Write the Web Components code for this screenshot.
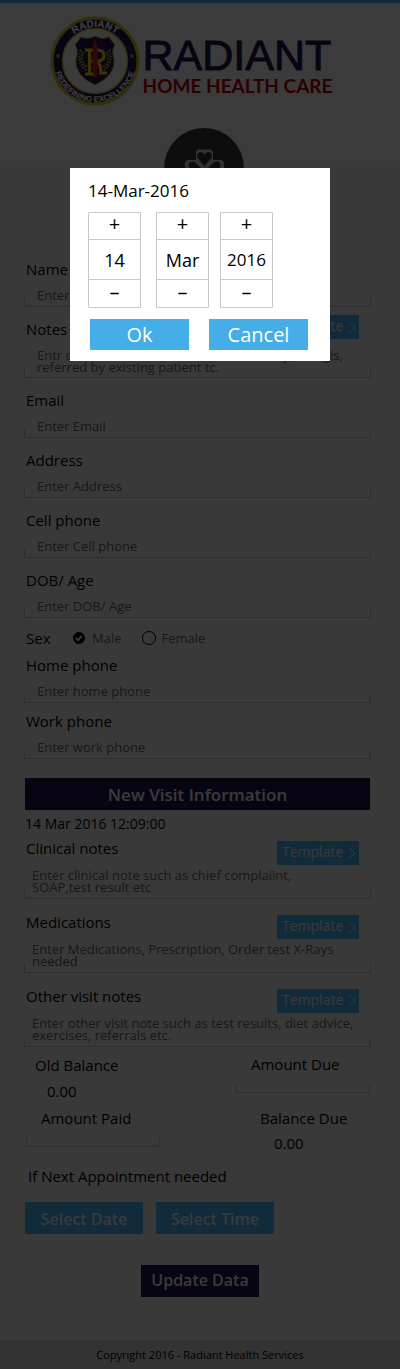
<!DOCTYPE html>
<html lang="en">
<head>
<meta charset="utf-8">
<meta name="viewport" content="width=device-width, initial-scale=1">
<title>Radiant Home Health Care</title>
<style>
  body { margin: 0; background: #e4e4e4; color: #000; font-family: "Open Sans", "Noto Sans", sans-serif; font-size: 15px; line-height: 20px; }
</style>
</head>
<body>
<patient-page></patient-page>

<script>
const define = (name, html, setup) => {
  const template = document.createElement('template');
  template.innerHTML = `<style>*, *::before { box-sizing: border-box; } button, input, textarea { font: inherit; color: inherit; border: 0; border-radius: 0; margin: 0; padding: 0; }</style>` + html;
  customElements.define(name, class extends HTMLElement {
    constructor() {
      super();
      this.attachShadow({ mode: 'open' }).append(template.content.cloneNode(true));
    }
    connectedCallback() { if (setup) setup(this, this.shadowRoot); }
  });
};

/* Round crest with lettering on its ring */
define('radiant-emblem', `
<style>
  :host { display: block; width: 90px; height: 90px; flex: none; }
  svg { display: block; width: 100%; height: 100%; }
  text { font-family: "Liberation Sans", sans-serif; font-weight: 700; fill: #fff; }
</style>
<svg viewBox="0 0 90 90" aria-label="Radiant, redefining excellence">
  <defs>
    <path id="upper" d="M11 45 A34 34 0 0 1 79 45"/>
    <path id="lower" d="M4 45 A41 41 0 0 0 86 45"/>
  </defs>
  <circle cx="45" cy="45" r="43" fill="#24134c" stroke="#c9be1e" stroke-width="3"/>
  <circle cx="45" cy="45" r="32.5" fill="#ececec" stroke="#c9be1e" stroke-width="1.4"/>
  <circle cx="8" cy="40" r="1.7" fill="#9a96ad"/>
  <circle cx="82" cy="40" r="1.7" fill="#9a96ad"/>
  <text font-size="10"><textPath href="#upper" startOffset="50%" text-anchor="middle">RADIANT</textPath></text>
  <text font-size="8"><textPath href="#lower" startOffset="50%" text-anchor="middle">REDEFINING EXCELLENCE</textPath></text>
  <path d="M31 21 Q38 24 45 20 Q52 24 59 21 L65 29 Q61 34 64 43 Q66 59 45 69 Q24 59 26 43 Q29 34 25 29 Z" fill="#24134c" stroke="#a8a020" stroke-width="1"/>
  <g fill="none" stroke="#c9be1e" stroke-width="2" stroke-dasharray="1.6 1.4">
    <path d="M31 34 Q26 45 36 54"/><path d="M59 34 Q64 45 54 54"/>
    <path d="M33.500 36 Q29 45 37 51"/><path d="M56.500 36 Q61 45 53 51"/>
  </g>
  <g fill="none" stroke="#e0d018" stroke-width="3.200">
    <path d="M35 34 H47 Q54 34 54 39.500 Q54 45 47 45 H41 M39.500 34 V58 M35 58 H44 M46 45 Q51 47 51 57 H57"/>
  </g>
  <path d="M45 22 L47.500 30 V50 H49 V53 H47 V61 H43 V53 H41 V50 H42.500 V30 Z" fill="#c8201c"/>
</svg>`);

define('brand-header', `
<style>
  :host { display: block; height: 167px; background: #ececec; border-top: 3px solid #45ade8; padding: 13px 0 0; }
  .logo { display: flex; justify-content: center; padding-right: 18px; gap: 3px; }
  .name { padding-top: 19px; white-space: nowrap; }
  h1, p { margin: 0; font-family: "Liberation Sans", sans-serif; }
  h1 { font-size: 43px; line-height: 40px; font-weight: 400; color: #24134c; -webkit-text-stroke: 1px #24134c; }
  p { font-family: Lato, sans-serif; font-size: 19px; line-height: 22px; font-weight: 700; color: #b00000; }
  .badge { display: block; width: 80px; height: 80px; margin: 22px auto 0; position: relative; left: 4px; }
</style>
<div class="logo">
  <radiant-emblem></radiant-emblem>
  <div class="name"><h1>RADIANT</h1><p>HOME HEALTH CARE</p></div>
</div>
<svg class="badge" viewBox="0 0 80 80" aria-hidden="true">
  <circle cx="40" cy="40" r="40" fill="#363636"/>
  <path d="M35 21.500 H45 Q49 21.500 49 25 V32 H56 Q60 32 60 36 V44 Q60 48 56 48 H49 V56 Q49 59 45 59 H35 Q32 59 32 56 V48 H25 Q21 48 21 44 V36 Q21 32 25 32 H32 V25 Q32 21.500 35 21.500 Z" fill="#c8c8c8"/>
  <g fill="#363636">
    <path d="M40.500 38 L33.500 30 Q32 24 36.500 24 Q39.500 24 40.500 27 Q41.500 24 44.500 24 Q49 24 47.500 30 Z"/>
    <path d="M38 41 L31 34 Q25 32 24.500 37 Q24.500 40 27 41 Q24.500 42 25 45 Q26 49 31 48 Z"/>
    <path d="M43 41 L50 34 Q56 32 56.500 37 Q56.500 40 54 41 Q56.500 42 56 45 Q55 49 50 48 Z"/>
  </g>
</svg>`);

define('template-button', `
<style>
  :host { display: block; }
  button { display: flex; align-items: center; gap: 5px; width: 82px; height: 24px; padding: 0 3px 2px 5px; background: #45ade8; color: #e4e4e4; font-size: 14px; line-height: 20px; }
  svg { width: 8px; height: 14px; flex: none; margin-top: 2px; }
</style>
<button type="button">Template<svg viewBox="0 0 8 14" fill="none" stroke="#e4e4e4" aria-hidden="true"><path d="M1 1.500 L7 7 L1 12.500"/></svg></button>`);

/* Labelled text box; "area" turns it into a text area with a template button */
define('form-field', `
<style>
  :host { display: block; }
  .head { display: flex; justify-content: space-between; padding: 0 12px 0 2px; height: 20px; }
  .box { display: block; width: 100%; height: 28px; padding: 5px 13px 1px; outline: 0; resize: none; overflow: hidden; font-size: 13px; line-height: 20px; border-bottom: 1px solid #b4b4b4;
    background: linear-gradient(#b4b4b4, #b4b4b4) left bottom / 1px 8px no-repeat, linear-gradient(#b4b4b4, #b4b4b4) right bottom / 1px 8px no-repeat; }
  textarea.box { height: 41px; padding: 11px 8px 0; line-height: 12px; }
  :host([wide]) textarea.box { padding: 12px 13px 0; }
  .box::placeholder { color: #606060; opacity: 1; }
  template-button { margin-top: 3px; }
  :host([wide]) .head { height: 18px; }
  :host([wide]) template-button { margin-top: -4px; }
</style>
<div class="head"><label for="box"></label></div>`, (host, root) => {
  const area = host.hasAttribute('area');
  const box = document.createElement(area ? 'textarea' : 'input');
  box.id = 'box';
  box.className = 'box';
  box.placeholder = host.getAttribute('hint');
  root.querySelector('label').textContent = host.getAttribute('label');
  root.append(box);
  if (area) root.querySelector('.head').append(document.createElement('template-button'));
});

define('sex-choice', `
<style>
  :host { display: block; }
  fieldset { display: flex; align-items: center; height: 19px; border: 0; margin: 0; padding: 0 2px; }
  .title { width: 46px; }
  label { display: flex; align-items: center; gap: 6px; font-size: 13px; color: #606060; margin-right: 20px; }
  .mark { display: grid; place-items: center; width: 14px; height: 14px; }
  .mark > * { grid-area: 1 / 1; }
  input { appearance: none; width: 14px; height: 14px; border: 1px solid #000; border-radius: 50%; }
  input:checked { width: 12px; height: 12px; background: #000; }
  svg { width: 8px; height: 8px; fill: none; stroke: #e4e4e4; stroke-width: 2; visibility: hidden; }
  input:checked + svg { visibility: visible; }
</style>
<fieldset aria-label="Sex">
  <span class="title">Sex</span>
  <label><span class="mark"><input type="radio" name="sex" checked><svg viewBox="0 0 8 8"><path d="M1 4 L3 6 L7 2"/></svg></span>Male</label>
  <label><span class="mark"><input type="radio" name="sex"><svg viewBox="0 0 8 8"><path d="M1 4 L3 6 L7 2"/></svg></span>Female</label>
</fieldset>`);

define('balance-grid', `
<style>
  :host { display: block; }
  .grid { display: grid; grid-template-columns: 134px 134px; justify-content: space-between; padding: 0 1px 0 2px; }
  .cell { display: flex; flex-direction: column; height: 54px; }
  .old { padding: 1px 0 0 9px; }
  .due { padding-left: 24px; }
  output { margin-top: 6px; padding-left: 12px; }
  .due output { margin-top: 5px; padding-left: 14px; }
  label { padding-left: 15px; }
  input { width: 100%; height: 9px; margin-top: 10px; outline: 0; font-size: 13px; border-bottom: 1px solid #b4b4b4;
    background: linear-gradient(#b4b4b4, #b4b4b4) left bottom / 1px 8px no-repeat, linear-gradient(#b4b4b4, #b4b4b4) right bottom / 1px 8px no-repeat; }
</style>
<div class="grid">
  <div class="cell old"><span>Old Balance</span><output>0.00</output></div>
  <div class="cell"><label for="due">Amount Due</label><input id="due"></div>
  <div class="cell"><label for="paid">Amount Paid</label><input id="paid"></div>
  <div class="cell due"><span>Balance Due</span><output>0.00</output></div>
</div>`);

define('action-button', `
<style>
  :host { display: block; width: 118px; }
  button { width: 100%; height: 32px; background: #45ade8; color: #e4e4e4; font-size: 16px; line-height: 20px; font-weight: 600; padding: 2px 0 0; }
  :host([dark]) button { background: #24134c; padding: 0 0 2px; }
</style>
<button type="button"><slot></slot></button>`);

define('value-stepper', `
<style>
  :host { display: flex; flex-direction: column; width: 53px; border: 1px solid #c8c8c8; border-radius: 1px; font-size: 20px; }
  button { background: none; line-height: 20px; padding-bottom: 4px; }
  .more { height: 26px; }
  .less { height: 27px; }
  input { width: 100%; height: 41px; text-align: center; background: none; outline: 0; font-size: 18px; border: solid #c8c8c8; border-width: 1px 0; }
  :host([small]) input { font-size: 17px; }
</style>
<button type="button" class="more">+</button>
<input>
<button type="button" class="less">–</button>`, (host, root) => {
  const name = host.getAttribute('name');
  const box = root.querySelector('input');
  box.value = host.getAttribute('value');
  box.setAttribute('aria-label', name);
  root.querySelector('.more').setAttribute('aria-label', 'Next ' + name);
  root.querySelector('.less').setAttribute('aria-label', 'Previous ' + name);
});

define('date-dialog', `
<style>
  :host { display: block; width: 260px; background: #fff; padding: 11px 22px 11px 18px; box-sizing: border-box; }
  h2 { margin: 0 0 10px; font-size: 17px; line-height: 23px; font-weight: 400; }
  .steps { display: flex; gap: 11px; }
  .steps > :first-child { margin-right: 4px; }
  .actions { display: flex; gap: 20px; padding-left: 2px; margin-top: 11px; }
  .actions button { flex: 1; height: 31px; background: #45ade8; color: #fff; font-size: 20px; line-height: 28px; }
</style>
<div role="dialog" aria-labelledby="title">
  <h2 id="title">14-Mar-2016</h2>
  <div class="steps">
    <value-stepper name="day" value="14"></value-stepper>
    <value-stepper name="month" value="Mar"></value-stepper>
    <value-stepper name="year" value="2016" small></value-stepper>
  </div>
  <div class="actions"><button type="button">Ok</button><button type="button">Cancel</button></div>
</div>`);

define('patient-page', `
<style>
  :host { display: block; position: relative; }
  form { display: block; margin: 0; padding: 92px 29px 43px 24px; }
  .group { display: flex; flex-direction: column; gap: 12px; }
  .tight { gap: 8px; margin-top: 10px; }
  .visit { gap: 13px; margin-top: 4px; }
  h2 { margin: 19px 1px 4px; height: 32px; background: #24134c; color: #e4e4e4; font-size: 17px; line-height: 34px; font-weight: 600; text-align: center; }
  time { display: block; padding-left: 1px; font-size: 14px; }
  balance-grid { margin-top: 7px; }
  .next { margin: 4px 4px 16px; }
  .pick { display: flex; gap: 13px; margin: 0 1px 31px; }
  action-button[dark] { margin: 0 auto; }
  .submit { display: flex; margin: 0 -5px 0 0; }
  footer { background: #cccccc; font-size: 11px; line-height: 29px; text-align: center; }
  .shade { position: absolute; inset: 0; background: rgba(0, 0, 0, .75); display: flex; justify-content: center; align-items: flex-start; padding-top: 168px; }
</style>
<brand-header></brand-header>
<form>
  <div class="group">
    <form-field label="Name" hint="Enter Name"></form-field>
    <form-field area wide label="Notes" hint="Entr detailed note such as medical history, allergis,&#10;referred by existing patient tc."></form-field>
    <form-field label="Email" hint="Enter Email"></form-field>
    <form-field label="Address" hint="Enter Address"></form-field>
    <form-field label="Cell phone" hint="Enter Cell phone"></form-field>
    <form-field label="DOB/ Age" hint="Enter DOB/ Age"></form-field>
  </div>
  <div class="group tight">
    <sex-choice></sex-choice>
    <form-field label="Home phone" hint="Enter home phone"></form-field>
    <form-field label="Work phone" hint="Enter work phone"></form-field>
  </div>
  <h2>New Visit Information</h2>
  <time datetime="2016-03-14T12:09:00">14 Mar 2016 12:09:00</time>
  <div class="group visit">
    <form-field area label="Clinical notes" hint="Enter clinical note such as chief complaiint,&#10;SOAP,test result etc"></form-field>
    <form-field area label="Medications" hint="Enter Medications, Prescription, Order test X-Rays&#10;needed"></form-field>
    <form-field area label="Other visit notes" hint="Enter other visit note such as test results, diet advice,&#10;exercises, referrals etc."></form-field>
  </div>
  <balance-grid></balance-grid>
  <div class="next">If Next Appointment needed</div>
  <div class="pick"><action-button>Select Date</action-button><action-button>Select Time</action-button></div>
  <div class="submit"><action-button dark>Update Data</action-button></div>
</form>
<footer>Copyright 2016 - Radiant Health Services</footer>
<div class="shade"><date-dialog></date-dialog></div>`);
</script>
</body>
</html>
